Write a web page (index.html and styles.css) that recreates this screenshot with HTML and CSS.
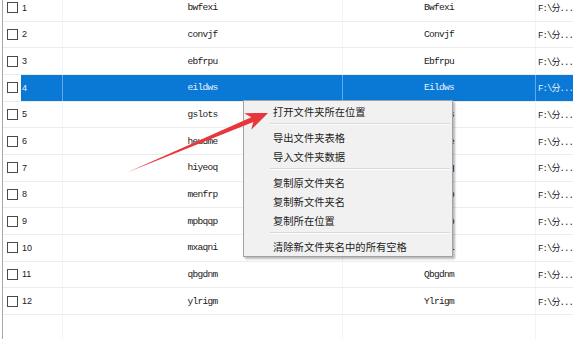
FILE: index.html
```html
<!DOCTYPE html>
<html lang="zh-CN">
<head>
    <meta charset="UTF-8">
    <title>文件夹列表</title>
    <link rel="stylesheet" href="styles.css">
</head>
<body>
    <div class="grid">
        <div class="row"><div class="c-check"><span class="box"></span></div><div class="c-num">1</div><div class="c-name">bwfexi</div><div class="c-new">Bwfexi</div><div class="c-path">F:\分...</div></div>
        <div class="row"><div class="c-check"><span class="box"></span></div><div class="c-num">2</div><div class="c-name">convjf</div><div class="c-new">Convjf</div><div class="c-path">F:\分...</div></div>
        <div class="row"><div class="c-check"><span class="box"></span></div><div class="c-num">3</div><div class="c-name">ebfrpu</div><div class="c-new">Ebfrpu</div><div class="c-path">F:\分...</div></div>
        <div class="row selected"><div class="c-check"><span class="box"></span></div><div class="c-num">4</div><div class="c-name">eildws</div><div class="c-new">Eildws</div><div class="c-path">F:\分...</div></div>
        <div class="row"><div class="c-check"><span class="box"></span></div><div class="c-num">5</div><div class="c-name">gslots</div><div class="c-new">Gslots</div><div class="c-path">F:\分...</div></div>
        <div class="row"><div class="c-check"><span class="box"></span></div><div class="c-num">6</div><div class="c-name">heudme</div><div class="c-new">Heudme</div><div class="c-path">F:\分...</div></div>
        <div class="row"><div class="c-check"><span class="box"></span></div><div class="c-num">7</div><div class="c-name">hiyeoq</div><div class="c-new">Hiyeoq</div><div class="c-path">F:\分...</div></div>
        <div class="row"><div class="c-check"><span class="box"></span></div><div class="c-num">8</div><div class="c-name">menfrp</div><div class="c-new">Menfrp</div><div class="c-path">F:\分...</div></div>
        <div class="row"><div class="c-check"><span class="box"></span></div><div class="c-num">9</div><div class="c-name">mpbqqp</div><div class="c-new">Mpbqqp</div><div class="c-path">F:\分...</div></div>
        <div class="row"><div class="c-check"><span class="box"></span></div><div class="c-num">10</div><div class="c-name">mxaqni</div><div class="c-new">Mxaqni</div><div class="c-path">F:\分...</div></div>
        <div class="row"><div class="c-check"><span class="box"></span></div><div class="c-num">11</div><div class="c-name">qbgdnm</div><div class="c-new">Qbgdnm</div><div class="c-path">F:\分...</div></div>
        <div class="row"><div class="c-check"><span class="box"></span></div><div class="c-num">12</div><div class="c-name">ylrigm</div><div class="c-new">Ylrigm</div><div class="c-path">F:\分...</div></div>
        <div class="row filler"><div class="c-check"></div><div class="c-num"></div><div class="c-name"></div><div class="c-new"></div><div class="c-path"></div></div>
    </div>

    <div class="menu">
        <div class="item">打开文件夹所在位置</div>
        <div class="sep"></div>
        <div class="item">导出文件夹表格</div>
        <div class="item">导入文件夹数据</div>
        <div class="sep"></div>
        <div class="item">复制原文件夹名</div>
        <div class="item">复制新文件夹名</div>
        <div class="item">复制所在位置</div>
        <div class="sep"></div>
        <div class="item">清除新文件夹名中的所有空格</div>
    </div>

    <!-- annotation arrow -->
    <svg class="arrow" width="573" height="339" viewBox="0 0 573 339">
        <polygon points="127,172.5 253.3,121.9 251.2,129.8 268,113 244.2,113.2 251.3,117.3" fill="#e8363b"/>
    </svg>
</body>
</html>
```

FILE: styles.css
```css
body {
    margin: 0;
    padding: 0;
    width: 573px;
    height: 339px;
    overflow: hidden;
    background-color: #ffffff;
    position: relative;
    font-family: 'Liberation Mono', 'Noto Sans CJK SC', monospace;
    color: #1a1a1a;
}

.grid {
    margin-top: -5px;
    margin-left: 2px;
    height: 344px;
    border-left: 1px solid #a8a8a8;
    display: flex;
    flex-direction: column;
}

.row {
    display: flex;
    align-items: stretch;
    height: 26.667px;
    box-sizing: border-box;
    border-bottom: 1px solid #ececec;
    font-size: 9.5px;
    letter-spacing: -0.7px;
}

.row > div {
    display: flex;
    align-items: center;
    box-sizing: border-box;
    overflow: hidden;
    white-space: nowrap;
}

.c-check {
    width: 18px;
    flex: none;
}

.box {
    width: 11px;
    height: 11px;
    box-sizing: border-box;
    border: 1px solid #4a4a4a;
    margin-left: 4px;
    background-color: #fff;
}

.c-num {
    width: 42px;
    flex: none;
    padding-left: 1px;
    border-right: 1px solid #f3f3f3;
    font-family: 'Liberation Sans', sans-serif;
    font-size: 9px;
    letter-spacing: 0;
}

.c-name {
    width: 280px;
    flex: none;
    justify-content: center;
    border-right: 1px solid #f3f3f3;
}

.c-new {
    width: 193px;
    flex: none;
    justify-content: center;
    border-right: 1px solid #f3f3f3;
}

.c-path {
    flex: 1;
    padding-left: 2px;
    font-size: 9px;
    letter-spacing: -0.9px;
}

.row.selected > div:not(.c-check) {
    background-color: #0a79d6;
    color: #e6f1fb;
    border-right-color: #62aae6;
}

.row.filler {
    flex: 1;
    border-bottom: none;
}

.menu {
    position: absolute;
    left: 243px;
    top: 100px;
    width: 210px;
    box-sizing: border-box;
    padding: 1px 0 0;
    background-color: #f1f1f1;
    border: 1px solid #a2a2a2;
    box-shadow: 2px 2px 2px rgba(0, 0, 0, 0.28);
    font-family: 'Noto Sans CJK SC', 'Noto Sans', sans-serif;
    font-size: 10.3px;
    color: #222;
}

.item {
    height: 19px;
    line-height: 19px;
    padding-left: 29px;
    white-space: nowrap;
}

.sep {
    height: 0;
    margin: 2px 2px 3px 26px;
    border-top: 1px solid #d9d9d9;
    border-bottom: 1px solid #fcfcfc;
}

.arrow {
    position: absolute;
    left: 0;
    top: 0;
    pointer-events: none;
}
```
